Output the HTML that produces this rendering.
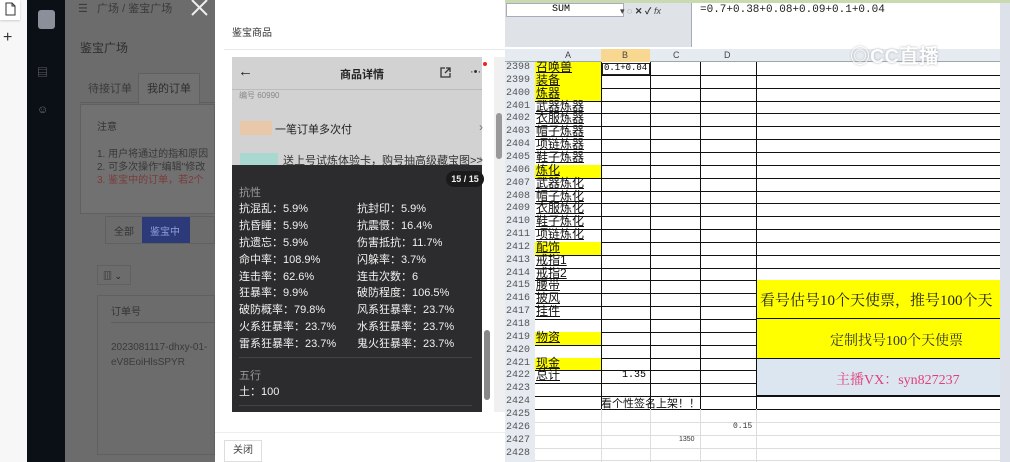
<!DOCTYPE html>
<html><head><meta charset="utf-8"><style>
*{margin:0;padding:0;box-sizing:border-box}
body{width:1010px;height:462px;overflow:hidden;position:relative;background:#fff;font-family:"Liberation Sans","Noto Sans CJK SC",sans-serif;font-size:12px}
.a{position:absolute;white-space:nowrap}
.sr{font-family:"Liberation Serif","Noto Serif CJK SC",serif}
.st span{position:absolute;color:#f0f0f0;font-size:11px}
</style></head><body>
<div class="a" style="left:0;top:0;width:27px;height:462px;background:#f7f7f7"></div>
<div class="a" style="left:0;top:0;width:20px;height:20px;background:#fff;box-shadow:0 1px 2px #ccc"></div>
<svg class="a" style="left:3px;top:2px" width="14" height="14"><path d="M3 1h6l3 3v9H3z M9 1v3h3" fill="none" stroke="#333" stroke-width="1"/></svg>
<div class="a" style="left:3px;top:29px;font-size:16px;color:#333">+</div>
<div class="a" style="left:27px;top:0;width:38px;height:462px;background:#0b0f16"></div>
<div class="a" style="left:38px;top:10px;width:17px;height:19px;background:#8a8f9a;border-radius:3px"></div>
<div class="a" style="left:37px;top:64px;color:#777;font-size:11px">▤</div>
<div class="a" style="left:37px;top:104px;color:#777;font-size:11px">☺</div>
<div class="a" style="left:65px;top:0;width:150px;height:462px;background:#6c6c6c"></div>
<div class="a" style="left:78px;top:0;color:#3a3a3a;font-size:11px">☰ &nbsp; 广场 / 鉴宝广场</div>
<div class="a" style="left:80px;top:39px;color:#2e2e2e;font-size:12px">鉴宝广场</div>
<div class="a" style="left:80px;top:73px;width:135px;height:30px;border-bottom:1px solid #5e5e5e"></div>
<div class="a" style="left:88px;top:80px;color:#3a3a3a;font-size:11px">待接订单</div>
<div class="a" style="left:138px;top:73px;width:62px;height:31px;background:#717171;border:1px solid #606060;border-bottom:none"></div>
<div class="a" style="left:147px;top:80px;color:#2e2e2e;font-size:11px">我的订单</div>
<div class="a" style="left:80px;top:104px;width:135px;height:110px;border:1px solid #606060;background:#717171"></div>
<div class="a" style="left:97px;top:118px;color:#333;font-size:10px">注意</div>
<div class="a" style="left:97px;top:148px;color:#383838;font-size:10px;line-height:13px">1. 用户将通过的指和原因<br>2. 可多次操作"编辑"修改<br><span style="color:#7a3a3a">3. 鉴宝中的订单，若2个</span></div>
<div class="a" style="left:105px;top:216px;width:110px;height:28px;border:1px solid #606060"></div>
<div class="a" style="left:114px;top:223px;color:#333;font-size:10px">全部</div>
<div class="a" style="left:142px;top:217px;width:48px;height:26px;background:#2d3a7a"></div>
<div class="a" style="left:150px;top:223px;color:#8fa0d8;font-size:10px">鉴宝中</div>
<div class="a" style="left:97px;top:265px;width:34px;height:20px;border:1px solid #606060;color:#222;font-size:9px;padding:3px 5px">▥ ⌄</div>
<div class="a" style="left:97px;top:295px;width:118px;height:160px;border:1px solid #606060"></div>
<div class="a" style="left:111px;top:303px;color:#333;font-size:10px">订单号</div>
<div class="a" style="left:111px;top:322px;width:104px;border-top:1px solid #5e5e5e"></div>
<div class="a" style="left:111px;top:340px;color:#3a3a3a;font-size:10px;line-height:15px">2023081117-dhxy-01-<br>eV8EoiHlsSPYR</div>
<svg class="a" style="left:190px;top:0" width="20" height="16"><path d="M2 0L17 15M17 0L2 15" stroke="#eee" stroke-width="2"/></svg>
<div class="a" style="left:215px;top:0;width:290px;height:462px;background:#fff"></div>
<div class="a" style="left:232px;top:24px;color:#333;font-size:10px">鉴宝商品</div>
<div class="a" style="left:224px;top:49px;width:281px;border-top:1px solid #e8e8e8"></div>
<div class="a" style="left:232px;top:57px;width:250px;height:110px;background:#d2d2d2"></div>
<div class="a" style="left:232px;top:89px;width:250px;border-top:1px solid #bbb"></div>
<div class="a" style="left:238px;top:63px;font-size:15px;color:#222">←</div>
<div class="a" style="left:340px;top:66px;font-size:11px;font-weight:bold;color:#222">商品详情</div>
<svg class="a" style="left:439px;top:66px" width="13" height="13"><path d="M6 2H2v9h9V7 M7 2h4v4 M11 2L6 7" fill="none" stroke="#333" stroke-width="1.3"/></svg>
<div class="a" style="left:470px;top:66px;font-size:11px;color:#333">·•·</div>
<div class="a" style="left:483px;top:62px;width:4px;height:4px;border-radius:2px;background:#e22"></div>
<div class="a" style="left:239px;top:90px;font-size:8px;color:#888">编号 60990</div>
<div class="a" style="left:240px;top:121px;width:32px;height:14px;background:#e8c8a8"></div>
<div class="a" style="left:275px;top:121px;font-size:11px;color:#222">一笔订单多次付</div>
<div class="a" style="left:479px;top:120px;font-size:12px;color:#777">›</div>
<div class="a" style="left:240px;top:153px;width:38px;height:12px;background:#a8d8d0"></div>
<div class="a" style="left:283px;top:152px;font-size:11px;color:#333">送上号试炼体验卡，购号抽高级藏宝图&gt;&gt;</div>
<div class="a" style="left:479px;top:152px;font-size:12px;color:#777">›</div>
<div class="a" style="left:232px;top:165px;width:250px;height:247px;background:#2c2c2e"></div>
<div class="a" style="left:446px;top:171px;width:38px;height:16px;border-radius:8px;background:#1a1a1a;color:#eee;font-size:9px;font-weight:bold;text-align:center;line-height:16px">15 / 15</div>
<div class="st">
<span style="left:239px;top:184px;color:#999">抗性</span>
<span style="left:239px;top:200px">抗混乱：5.9%</span><span style="left:357px;top:200px">抗封印：5.9%</span>
<span style="left:239px;top:217px">抗昏睡：5.9%</span><span style="left:357px;top:217px">抗震慑：16.4%</span>
<span style="left:239px;top:234px">抗遗忘：5.9%</span><span style="left:357px;top:234px">伤害抵抗：11.7%</span>
<span style="left:239px;top:251px">命中率：108.9%</span><span style="left:357px;top:251px">闪躲率：3.7%</span>
<span style="left:239px;top:268px">连击率：62.6%</span><span style="left:357px;top:268px">连击次数：6</span>
<span style="left:239px;top:284px">狂暴率：9.9%</span><span style="left:357px;top:284px">破防程度：106.5%</span>
<span style="left:239px;top:301px">破防概率：79.8%</span><span style="left:357px;top:301px">风系狂暴率：23.7%</span>
<span style="left:239px;top:318px">火系狂暴率：23.7%</span><span style="left:357px;top:318px">水系狂暴率：23.7%</span>
<span style="left:239px;top:335px">雷系狂暴率：23.7%</span><span style="left:357px;top:335px">鬼火狂暴率：23.7%</span>
<span style="left:239px;top:367px;color:#999">五行</span>
<span style="left:239px;top:383px">土：100</span>
</div>
<div class="a" style="left:239px;top:357px;width:233px;border-top:1px solid #444"></div>
<div class="a" style="left:239px;top:405px;width:233px;border-top:1px solid #444"></div>
<div class="a" style="left:494px;top:57px;width:11px;height:355px;background:#f0f0f0"></div>
<div class="a" style="left:496px;top:113px;width:6px;height:46px;border-radius:3px;background:#999"></div>
<div class="a" style="left:484px;top:330px;width:6px;height:70px;border-radius:3px;background:#888"></div>
<div class="a" style="left:215px;top:432px;width:290px;border-top:1px solid #eee"></div>
<div class="a" style="left:224px;top:440px;width:38px;height:22px;border:1px solid #ddd;font-size:10px;color:#444;text-align:center;line-height:20px">关闭</div>
<div class="a" style="left:505px;top:0;width:505px;height:462px;background:#fff"></div>
<div class="a" style="left:505px;top:0;width:505px;height:3px;background:#c9d9b0"></div>
<div class="a" style="left:505px;top:3px;width:505px;height:44px;background:#dfe3e8"></div>
<div class="a" style="left:506px;top:3px;width:118px;height:14px;background:#fff;border:1px solid #aab"></div>
<div class="a" style="left:552px;top:4px;font-size:10px;font-family:'Liberation Mono',monospace">SUM</div>
<div class="a" style="left:620px;top:4px;font-size:9px;color:#444">▾ ◌ <b style="color:#333">✕ ✓</b> <i>fx</i></div>
<div class="a" style="left:691px;top:3px;width:309px;height:44px;background:#fff;border-left:1px solid #aab"></div>
<div class="a" style="left:700px;top:4px;font-size:11px;font-family:'Liberation Mono','Noto Sans CJK SC',monospace;color:#222">=0.7+0.38+0.08+0.09+0.1+0.04</div>
<div class="a" style="left:1000px;top:3px;width:10px;height:459px;background:#dde2ea"></div>
<div class="a" style="left:505px;top:49px;width:495px;height:13px;background:#e6ebf2;border-bottom:1px solid #9aa"></div>
<div class="a" style="left:601px;top:49px;width:49px;height:13px;background:#f8d890"></div>
<div class="a" style="left:565px;top:50px;font-size:9px;color:#444">A</div>
<div class="a" style="left:622px;top:50px;font-size:9px;color:#444">B</div>
<div class="a" style="left:673px;top:50px;font-size:9px;color:#444">C</div>
<div class="a" style="left:724px;top:50px;font-size:9px;color:#444">D</div>
<div class="a" style="left:850px;top:40px;font-size:20px;color:#fff;font-weight:bold;opacity:.85;text-shadow:0 0 2px #999">◎CC直播</div>
<div id="grid"></div>
<script>
(function(){
var top=62,h=12.85,html='';
var A={2398:'召唤兽',2399:'装备',2400:'炼器',2401:'武器炼器',2402:'衣服炼器',2403:'帽子炼器',2404:'项链炼器',2405:'鞋子炼器',2406:'炼化',2407:'武器炼化',2408:'帽子炼化',2409:'衣服炼化',2410:'鞋子炼化',2411:'项链炼化',2412:'配饰',2413:'戒指1',2414:'戒指2',2415:'腰带',2416:'披风',2417:'挂件',2419:'物资',2421:'现金',2422:'总计'};
var Y={2398:1,2399:1,2400:1,2406:1,2412:1,2419:1,2421:1};
html+='<div class="a" style="left:505px;top:62px;width:30px;height:400px;background:#e6ebf2"></div>';
for(var i=0;i<31;i++){var r=2398+i,y=top+i*h;
 if(Y[r])html+='<div class="a" style="left:535px;top:'+y+'px;width:66px;height:'+h+'px;background:#ffff00"></div>';
 html+='<div class="a" style="left:506px;top:'+(y)+'px;font-size:10px;color:#555;font-family:Liberation Mono,monospace">'+r+'</div>';
 if(A[r])html+='<div class="a" style="left:536px;top:'+(y-1)+'px;font-size:12px;line-height:13px;color:#111;text-decoration:underline">'+A[r]+'</div>';
 var c=r<=2424?'#111':'#ddd';
 html+='<div class="a" style="left:535px;top:'+(y+h)+'px;width:465px;border-top:1px solid '+c+'"></div>';
}
var endY=top+27*h;
['601','650','700','756'].forEach(function(x){html+='<div class="a" style="left:'+x+'px;top:62px;height:'+(endY-62)+'px;border-left:1px solid #111"></div><div class="a" style="left:'+x+'px;top:'+endY+'px;height:'+(462-endY)+'px;border-left:1px solid #ddd"></div>';});
var y1=top+17*h,y2=top+20*h,y3=top+23*h,y4=top+26*h;
html+='<div class="a" style="left:757px;top:'+y1+'px;width:243px;height:'+(y2-y1)+'px;background:#ffff00;border-bottom:1px solid #111"></div>';
html+='<div class="a" style="left:757px;top:'+y2+'px;width:243px;height:'+(y3-y2)+'px;background:#ffff00"></div>';
html+='<div class="a" style="left:757px;top:'+y3+'px;width:243px;height:'+(y4-y3)+'px;background:#dce6f0;border-top:1px solid #111;border-bottom:1px solid #111"></div>';
html+='<div class="a sr" style="left:760px;top:'+(y1+9)+'px;font-size:15px;color:#222">看号估号10个天使票，推号100个天</div>';
html+='<div class="a sr" style="left:830px;top:'+(y2+11)+'px;font-size:14px;color:#333">定制找号100个天使票</div>';
html+='<div class="a sr" style="left:836px;top:'+(y3+11)+'px;font-size:14px;color:#e0407a">主播VX：syn827237</div>';
html+='<div class="a" style="left:602px;top:'+(top+1)+'px;width:48px;height:'+(h-1)+'px;background:#fff;border:1px solid #222"></div>';
html+='<div class="a" style="left:604px;top:'+(top+1)+'px;font-size:9px;font-family:Liberation Mono,monospace">0.1+0.04</div>';
html+='<div class="a" style="left:622px;top:'+(top+24*h)+'px;font-size:10px;font-family:Liberation Mono,monospace">1.35</div>';
html+='<div class="a" style="left:601px;top:'+(top+26*h-1)+'px;width:99px;overflow:hidden;font-size:11px;color:#111">看个性签名上架！！！</div>';
html+='<div class="a" style="left:733px;top:'+(top+28*h)+'px;font-size:8px;color:#333;font-family:Liberation Mono,monospace">0.15</div>';
html+='<div class="a" style="left:679px;top:'+(top+29*h+1)+'px;font-size:7px;color:#333">1350</div>';
document.getElementById('grid').innerHTML=html;
})();
</script>
</body></html>
